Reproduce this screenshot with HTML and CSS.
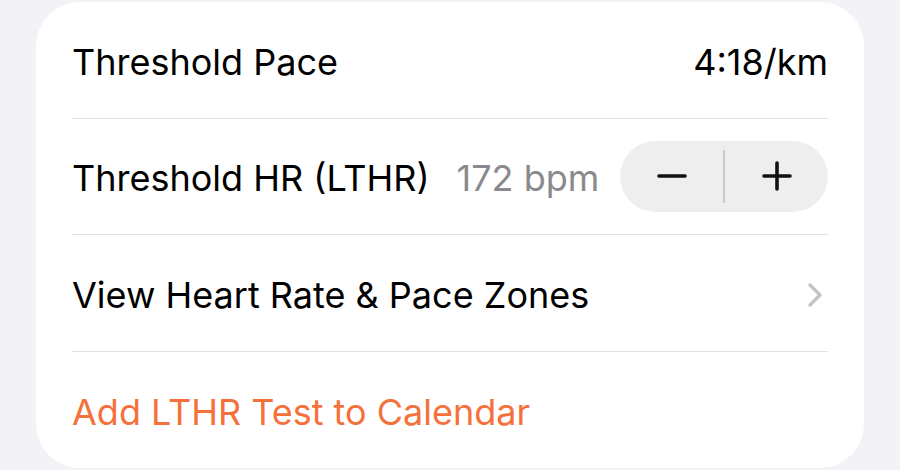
FILE: index.html
```html
<html>
<head>
  <title>Threshold Settings</title>
  <link rel="stylesheet" href="styles.css">
</head>
<body>
  <div class="card">
    <div class="row">
      <span class="label">Threshold Pace</span>
      <span class="value">4:18/km</span>
    </div>
    <div class="row">
      <span class="label">Threshold HR (LTHR)</span>
      <span class="detail">172 bpm</span>
      <div class="stepper">
        <button class="step">
          <svg width="30" height="30" viewBox="0 0 30 30"><path d="M2 15H28" stroke="#111" stroke-width="3.6" stroke-linecap="round"/></svg>
        </button>
        <span class="step-divider"></span>
        <button class="step">
          <svg width="30" height="30" viewBox="0 0 30 30"><path d="M2 15H28M15 2V28" stroke="#111" stroke-width="3.6" stroke-linecap="round"/></svg>
        </button>
      </div>
    </div>
    <div class="row">
      <span class="label">View Heart Rate &amp; Pace Zones</span>
      <svg class="chevron" width="16" height="26" viewBox="0 0 16 26"><path d="M3 3L13 13L3 23" fill="none" stroke="#c4c4c7" stroke-width="3.4" stroke-linecap="round" stroke-linejoin="round"/></svg>
    </div>
    <div class="row last">
      <span class="label action">Add LTHR Test to Calendar</span>
    </div>
  </div>
</body>
</html>
```

FILE: styles.css
```css
body {
  margin: 0;
  background-color: #f2f2f7;
  font-family: Inter, 'Noto Sans', sans-serif;
  color: #000;
}

.card {
  margin: 2px 36px 0 36px;
  background-color: #ffffff;
  border-radius: 44px;
  padding: 0 36px;
}

.row {
  display: flex;
  align-items: center;
  box-sizing: border-box;
  height: 116.5px;
  padding-top: 4px;
  border-bottom: 1.5px solid #e2e2e5;
  font-size: 36px;
}

.row.last {
  border-bottom: none;
}

.label {
  flex: none;
}

.value {
  margin-left: auto;
}

.detail {
  color: #8a8a8e;
  margin-left: 27px;
}

.action {
  color: #f4713c;
}

.stepper {
  margin-left: auto;
  display: flex;
  align-items: center;
  width: 208px;
  height: 71px;
  background-color: #eeeeef;
  border-radius: 36px;
  margin-top: -4px;
}

.step {
  flex: 1;
  height: 100%;
  border: none;
  background: none;
  display: flex;
  align-items: center;
  justify-content: center;
  padding: 0;
  cursor: pointer;
}

.step-divider {
  width: 2px;
  height: 53px;
  background-color: #c9c9cc;
}

.chevron {
  margin-left: auto;
  margin-right: 5px;
}
```
